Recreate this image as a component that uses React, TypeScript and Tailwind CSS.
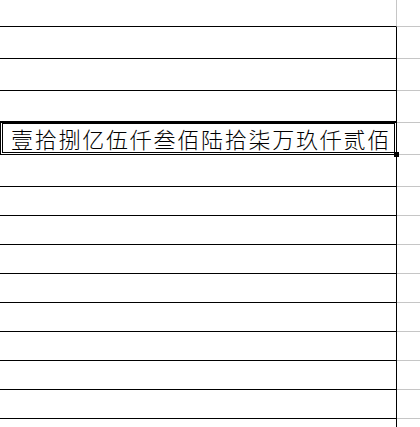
const rowHeights = [27, 32, 32, 32, 32, 32, 29, 29, 29, 29, 29, 29, 29, 29, 29]
const selectedRow = 4
const amount = "壹拾捌亿伍仟叁佰陆拾柒万玖仟贰佰"

export default function App() {
  return (
    <div className="h-[427px] w-[420px] overflow-hidden bg-white">
      {rowHeights.map((h, i) => (
        <div key={i} className={`flex ${h === 27 ? "h-[27px]" : h === 32 ? "h-[32px]" : "h-[29px]"}`}>
          <div
            className={`relative flex w-[397px] shrink-0 items-center justify-end border-b border-r border-b-black ${
              i === 0 ? "border-r-[#c6c6c6]" : "border-r-black"
            }`}
          >
            {i === selectedRow && (
              <>
                <div className="absolute -top-[2px] left-0 h-[34px] w-[397px] border-[3px] border-double border-black" />
                <div className="absolute -bottom-[3px] -right-[3px] h-[5px] w-[5px] bg-black" />
                <span
                  className="relative pr-[5px] text-[22px] font-light leading-[31px] tracking-[1.75px] text-black"
                  style={{ fontFamily: '"Noto Sans CJK SC", sans-serif' }}
                >
                  {amount}
                </span>
              </>
            )}
          </div>
          <div className="flex-1 border-b border-[#c6c6c6]" />
        </div>
      ))}
    </div>
  )
}
